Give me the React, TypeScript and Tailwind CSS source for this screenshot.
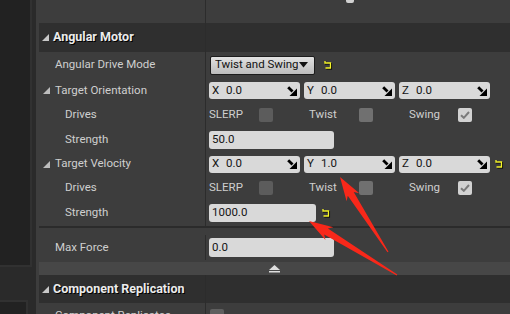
import React from "react";

const Expander = ({ color = "#c8c8c8" }: { color?: string }) => (
  <svg width="7" height="7" viewBox="0 0 7 7" className="shrink-0">
    <polygon points="7,0 7,7 0,7" fill={color} />
  </svg>
);

const Reset = () => (
  <svg width="10" height="10" viewBox="0 0 10 10" className="shrink-0">
    <path d="M2 1 V3 H7.5 V8 H2.5" fill="none" stroke="#000" strokeWidth="1.5" transform="translate(0.8,0.8)" />
    <path d="M2 1 V3 H7.5 V8 H2.5" fill="none" stroke="#f5f52a" strokeWidth="1.3" />
  </svg>
);

const DragIcon = () => (
  <svg width="10" height="10" viewBox="0 0 10 10" className="shrink-0">
    <path d="M1.2 1.2 L5.5 5.5" stroke="#000" strokeWidth="2.8" />
    <polygon points="2.5,10 10,10 10,2.5" fill="#000" />
  </svg>
);

const VecField = ({ axis, value, w }: { axis: string; value: string; w: string }) => (
  <div className={`${w} h-[17px] rounded-[3px] bg-[#d9d9d9] flex items-center pl-[3px] pr-[3px] text-[#141414] text-[11.5px]`}>
    <span className="w-[14px]">{axis}</span>
    <span className="flex-1">{value}</span>
    <DragIcon />
  </div>
);

const Check = ({ checked, tone }: { checked?: boolean; tone?: string }) =>
  checked ? (
    <div className="w-[14px] h-[14px] rounded-[2px] bg-[#d2d2d2] flex items-center justify-center">
      <svg width="10" height="8" viewBox="0 0 10 8">
        <path d="M1 4.2 L3.8 6.8 L9 1" fill="none" stroke="#7a7a7a" strokeWidth="2" />
      </svg>
    </div>
  ) : (
    <div className={`w-[14px] h-[14px] rounded-[2px] ${tone ?? "bg-[#5f5f5f]"}`} />
  );

const Drives = () => (
  <div className="flex items-center text-[#cfcfcf] text-[11.5px]">
    <div className="w-[100px] flex items-center">
      <span className="w-[50px]">SLERP</span>
      <Check tone="bg-[#5c5c5c]" />
    </div>
    <div className="w-[100px] flex items-center">
      <span className="w-[50px]">Twist</span>
      <Check tone="bg-[#707070]" />
    </div>
    <div className="w-[100px] flex items-center">
      <span className="w-[49px]">Swing</span>
      <Check checked />
    </div>
  </div>
);

const Divider = () => <div className="w-px bg-[#2c2c2c] shrink-0" />;

function arrowPoints(tx: number, ty: number, ex: number, ey: number) {
  const dx = ex - tx;
  const dy = ey - ty;
  const len = Math.hypot(dx, dy);
  const ux = dx / len;
  const uy = dy / len;
  const nx = -uy;
  const ny = ux;
  const hl = 24;
  const hw = 7.5;
  const sw = 3.5;
  const bx = tx + ux * hl;
  const by = ty + uy * hl;
  const nbx = tx + ux * (hl - 4);
  const nby = ty + uy * (hl - 4);
  const pts = [
    [tx, ty],
    [bx + nx * hw, by + ny * hw],
    [nbx + nx * sw, nby + ny * sw],
    [ex + nx * 0.6, ey + ny * 0.6],
    [ex - nx * 0.6, ey - ny * 0.6],
    [nbx - nx * sw, nby - ny * sw],
    [bx - nx * hw, by - ny * hw],
  ];
  return pts.map((p) => `${p[0].toFixed(1)},${p[1].toFixed(1)}`).join(" ");
}

export default function App() {
  return (
    <div className="relative w-[510px] h-[314px] overflow-hidden flex bg-[#2a2a2a] font-['Roboto',sans-serif] select-none">
      {/* left strip */}
      <div className="w-[36px] shrink-0 flex flex-col">
        <div className="w-[32px] h-[267px] bg-[#222222] border-r-2 border-b-2 border-[#313131]" />
        <div className="mt-[33px] w-[28px] flex-1 bg-[#222222] border-r-2 border-t-2 border-[#313131]" />
      </div>

      {/* main panel */}
      <div className="flex-1 bg-[#3d3d3d] flex flex-col">
        {/* top cut row */}
        <div className="flex h-[23px] overflow-hidden shrink-0">
          <div className="w-[169px] shrink-0 pl-[19px] text-[11.5px] text-[#cfcfcf]">
            <div className="-mt-[13px] leading-[14px] whitespace-nowrap">Spring Angular Strength</div>
          </div>
          <Divider />
          <div className="flex-1 flex items-start pl-[112px] text-[11.5px] text-[#cfcfcf]">
            <div className="-mt-[13px] leading-[14px] w-[28px]">Only</div>
            <div className="-mt-[11px] w-[8px] h-[14px] bg-[#d2d2d2] rounded-[2px]" />
          </div>
        </div>

        {/* header Angular Motor */}
        <div className="flex h-[29px] ml-[3px] bg-[#2f2f2f] shrink-0">
          <div className="w-[166px] shrink-0 flex items-center pl-[3px] gap-[4px]">
            <Expander />
            <span className="text-[12.5px] font-bold text-[#ececec] [text-shadow:1px_1px_0_#000]">Angular Motor</span>
          </div>
          <Divider />
          <div className="flex-1" />
        </div>

        {/* Angular Drive Mode */}
        <div className="flex h-[26px] shrink-0">
          <div className="w-[169px] shrink-0 flex items-center pl-[19px] text-[11.5px] text-[#cfcfcf]">Angular Drive Mode</div>
          <Divider />
          <div className="flex-1 flex items-center pl-[4px] gap-[8px]">
            <div className="w-[105px] h-[19px] border border-[#1c1c1c] rounded-[2px] bg-gradient-to-b from-[#e2e2e2] to-[#bcbcbc] flex items-center pl-[4px] pr-[6px] gap-[1px] text-[11.5px] text-[#111] whitespace-nowrap">
              <span className="flex-1 overflow-hidden">Twist and Swing</span>
              <svg width="9" height="6" viewBox="0 0 9 6" className="shrink-0">
                <polygon points="0,0 9,0 4.5,5.5" fill="#111" />
              </svg>
            </div>
            <Reset />
          </div>
        </div>

        {/* Target Orientation */}
        <div className="flex h-[25px] shrink-0">
          <div className="w-[169px] shrink-0 flex items-center pl-[7px] gap-[5px] text-[11.5px] text-[#cfcfcf]">
            <Expander color="#bdbdbd" />
            <span>Target Orientation</span>
          </div>
          <Divider />
          <div className="flex-1 flex items-center pl-[3px] gap-[4px]">
            <VecField axis="X" value="0.0" w="w-[91px]" />
            <VecField axis="Y" value="0.0" w="w-[91px]" />
            <VecField axis="Z" value="0.0" w="w-[91px]" />
          </div>
        </div>

        {/* Drives */}
        <div className="flex h-[24px] shrink-0">
          <div className="w-[169px] shrink-0 flex items-center pl-[29px] text-[11.5px] text-[#cfcfcf]">Drives</div>
          <Divider />
          <div className="flex-1 flex items-center pl-[3px]">
            <Drives />
          </div>
        </div>

        {/* Strength */}
        <div className="flex h-[25px] shrink-0">
          <div className="w-[169px] shrink-0 flex items-center pl-[29px] text-[11.5px] text-[#cfcfcf]">Strength</div>
          <Divider />
          <div className="flex-1 flex items-center pl-[3px]">
            <div className="w-[125px] h-[18px] rounded-[3px] bg-[#d9d9d9] flex items-center pl-[3px] text-[11.5px] text-[#141414]">50.0</div>
          </div>
        </div>

        {/* Target Velocity */}
        <div className="flex h-[24px] shrink-0">
          <div className="w-[169px] shrink-0 flex items-center pl-[7px] gap-[5px] text-[11.5px] text-[#cfcfcf]">
            <Expander color="#bdbdbd" />
            <span>Target Velocity</span>
          </div>
          <Divider />
          <div className="flex-1 flex items-center pl-[3px] gap-[4px]">
            <VecField axis="X" value="0.0" w="w-[91px]" />
            <VecField axis="Y" value="1.0" w="w-[91px]" />
            <VecField axis="Z" value="0.0" w="w-[91px]" />
            <Reset />
          </div>
        </div>

        {/* Drives */}
        <div className="flex h-[24px] shrink-0">
          <div className="w-[169px] shrink-0 flex items-center pl-[29px] text-[11.5px] text-[#cfcfcf]">Drives</div>
          <Divider />
          <div className="flex-1 flex items-center pl-[3px]">
            <Drives />
          </div>
        </div>

        {/* Strength */}
        <div className="flex h-[26px] shrink-0">
          <div className="w-[169px] shrink-0 flex items-center pl-[29px] text-[11.5px] text-[#cfcfcf]">Strength</div>
          <Divider />
          <div className="flex-1 flex items-center pl-[3px] gap-[5px]">
            <div className="w-[107px] h-[18px] rounded-[3px] bg-[#d9d9d9] flex items-center pl-[3px] text-[11.5px] text-[#141414]">1000.0</div>
            <Reset />
          </div>
        </div>

        {/* shadow line */}
        <div className="h-[2px] ml-[3px] bg-[#2b2b2b] shrink-0" />

        {/* Max Force */}
        <div className="flex h-[34px] shrink-0 pt-[5px]">
          <div className="w-[169px] shrink-0 flex items-center pl-[19px] text-[11.5px] text-[#cfcfcf]">Max Force</div>
          <div className="w-px bg-[#2c2c2c] shrink-0 mt-[2px] mb-[2px]" />
          <div className="flex-1 flex items-center pl-[3px]">
            <div className="w-[125px] h-[19px] rounded-[3px] bg-[#d9d9d9] flex items-center pl-[3px] text-[11.5px] text-[#141414]">0.0</div>
          </div>
        </div>

        {/* advanced separator */}
        <div className="h-[13px] ml-[3px] bg-[#474747] flex items-center justify-center shrink-0">
          <svg width="11" height="8" viewBox="0 0 11 8">
            <polygon points="5.5,0 11,5 0,5" fill="#dedede" />
            <rect x="0" y="6" width="11" height="1.5" fill="#dedede" />
          </svg>
        </div>

        {/* header Component Replication */}
        <div className="flex h-[28px] ml-[3px] bg-[#2f2f2f] shrink-0">
          <div className="w-[166px] shrink-0 flex items-center pl-[3px] gap-[4px]">
            <Expander />
            <span className="text-[12.5px] font-bold text-[#ececec] [text-shadow:1px_1px_0_#000] whitespace-nowrap">Component Replication</span>
          </div>
          <Divider />
          <div className="flex-1" />
        </div>

        {/* cut row */}
        <div className="flex h-[26px] shrink-0">
          <div className="w-[169px] shrink-0 flex items-center pl-[19px] text-[11.5px] text-[#cfcfcf]">Component Replicates</div>
          <Divider />
          <div className="flex-1 flex items-center pl-[4px]">
            <Check tone="bg-[#5f5f5f]" />
          </div>
        </div>
      </div>

      {/* annotation arrows */}
      <svg className="absolute left-0 top-0 pointer-events-none" width="510" height="314" viewBox="0 0 510 314">
        <polygon points={arrowPoints(340, 177, 388, 252)} fill="#f8281a" />
        <polygon points={arrowPoints(309, 221, 397, 275)} fill="#f8281a" />
      </svg>
    </div>
  );
}
